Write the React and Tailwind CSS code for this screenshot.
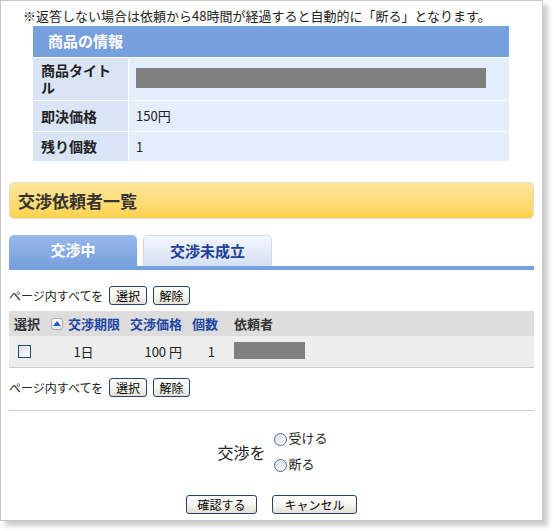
import React from "react";

function Btn({ children, className = "" }) {
  return (
    <button
      className={
        "h-[19px] border border-[#23426e] rounded-[3px] bg-linear-to-b from-white via-[#f7f6f1] to-[#e3e0d3] text-[12px] leading-none text-black flex items-center justify-center " +
        className
      }
    >
      {children}
    </button>
  );
}

function Radio() {
  return (
    <span className="w-[13px] h-[13px] rounded-full border border-[#4a6f98] bg-linear-to-br from-[#d8dde3] to-white inline-block shrink-0" />
  );
}

function SelectRow() {
  return (
    <div className="flex items-center h-[19px] text-[12px]">
      <span className="w-[100px] text-[#222]">ページ内すべてを</span>
      <Btn className="w-[38px]">選択</Btn>
      <Btn className="w-[37px] ml-[6px]">解除</Btn>
    </div>
  );
}

export default function App() {
  return (
    <div className="w-[554px] h-[531px] bg-white font-['Noto_Sans_CJK_JP','Noto_Sans',sans-serif] text-[#222]">
      <div className="w-[543px] h-[521px] border border-[#c6c6c6] bg-white shadow-[5px_5px_5px_rgba(0,0,0,0.2)] px-[8px] flex flex-col">
        {/* note */}
        <div className="pt-[5px] h-[25px] leading-[20px] text-[13px] pl-[14px] whitespace-nowrap">
          ※返答しない場合は依頼から48時間が経過すると自動的に「断る」となります。
        </div>

        {/* info table */}
        <div className="ml-[24px] w-[476px] flex flex-col gap-px">
          <div className="h-[31px] bg-[#76a0de] text-white font-bold text-[15px] flex items-center pl-[15px]">
            商品の情報
          </div>
          <div className="flex gap-px h-[42px]">
            <div className="w-[95px] bg-[#d9e4f6] font-bold text-[14px] leading-[17px] pl-[8px] flex items-center">
              <span>
                商品タイト
                <br />
                ル
              </span>
            </div>
            <div className="flex-1 bg-[#e5eefd] flex items-start pt-[10px] pl-[7px]">
              <div className="w-[350px] h-[20px] bg-[#808080]" />
            </div>
          </div>
          <div className="flex gap-px h-[30px]">
            <div className="w-[95px] bg-[#d9e4f6] font-bold text-[14px] pl-[8px] flex items-center">
              即決価格
            </div>
            <div className="flex-1 bg-[#e5eefd] text-[13px] pl-[7px] flex items-center">
              150円
            </div>
          </div>
          <div className="flex gap-px h-[29px]">
            <div className="w-[95px] bg-[#d9e4f6] font-bold text-[14px] pl-[8px] flex items-center">
              残り個数
            </div>
            <div className="flex-1 bg-[#e5eefd] text-[13px] pl-[7px] flex items-center">
              1
            </div>
          </div>
        </div>

        {/* yellow title */}
        <div className="mt-[21px] h-[37px] w-[525px] rounded-[5px] border border-[#e2ddd0] bg-linear-to-b from-[#fde79d] to-[#ffd24c] flex items-center pl-[8px] text-[17px] font-bold text-[#333]">
          交渉依頼者一覧
        </div>

        {/* tabs */}
        <div className="mt-[16px] flex items-end h-[31px]">
          <div className="w-[128px] h-[31px] rounded-t-[5px] bg-linear-to-b from-[#9ab8ea] to-[#78a0dd] text-white font-bold text-[15px] flex items-center justify-center">
            交渉中
          </div>
          <div className="ml-[6px] w-[129px] h-[31px] rounded-t-[5px] border border-b-0 border-[#d3d9e4] bg-linear-to-b from-[#f4f7fd] to-[#d4e0f4] text-[#1d3f9a] font-bold text-[15px] flex items-center justify-center">
            交渉未成立
          </div>
        </div>
        <div className="h-[4px] bg-[#76a0de]" />

        {/* select row */}
        <div className="mt-[16px]">
          <SelectRow />
        </div>

        {/* list table */}
        <div className="mt-[6px] border-b border-[#cccccc]">
          <div className="h-[25px] bg-[#dddddd] flex items-center text-[13px] font-bold">
            <span className="w-[42px] pl-[5px] text-[#333]">選択</span>
            <span className="w-[12px] h-[12px] rounded-[3px] border border-[#a8adb5] bg-linear-to-b from-white to-[#e6e9ee] flex items-center justify-center">
              <svg width="8" height="5" viewBox="0 0 8 5">
                <path d="M0 5 L4 0 L8 5 Z" fill="#1d5fd0" />
              </svg>
            </span>
            <span className="ml-[5px] text-[#1f45a3]">交渉期限</span>
            <span className="ml-[10px] text-[#1f45a3]">交渉価格</span>
            <span className="ml-[10px] text-[#1f45a3]">個数</span>
            <span className="ml-[16px] text-[#333]">依頼者</span>
          </div>
          <div className="h-[31px] bg-[#eeeeee] flex items-center text-[13px]">
            <span className="w-[42px] pl-[9px] flex">
              <span className="w-[13px] h-[13px] border border-[#1c4f82] bg-linear-to-br from-[#dcdcd6] to-white inline-block" />
            </span>
            <span className="w-[65px] text-center">1日</span>
            <span className="w-[66px] text-right">100 円</span>
            <span className="w-[33px] text-right">1</span>
            <span className="ml-[19px] w-[71px] h-[17px] bg-[#808080] -mt-[2px]" />
          </div>
        </div>

        {/* select row 2 */}
        <div className="mt-[10px]">
          <SelectRow />
        </div>

        <div className="mt-[13px] h-px bg-[#cccccc]" />

        {/* radio section */}
        <div className="mt-[15px] flex justify-center items-center pl-[2px]">
          <span className="text-[16px] mr-[8px]">交渉を</span>
          <div className="flex flex-col">
            <label className="h-[26px] flex items-center gap-[2px] text-[13px]">
              <Radio />
              <span className="-mt-[2px]">受ける</span>
            </label>
            <label className="h-[26px] flex items-center gap-[2px] text-[13px]">
              <Radio />
              <span className="-mt-[2px]">断る</span>
            </label>
          </div>
        </div>

        {/* buttons */}
        <div className="mt-[17px] flex justify-center gap-[15px]">
          <Btn className="w-[71px]">確認する</Btn>
          <Btn className="w-[85px]">キャンセル</Btn>
        </div>
      </div>
    </div>
  );
}
